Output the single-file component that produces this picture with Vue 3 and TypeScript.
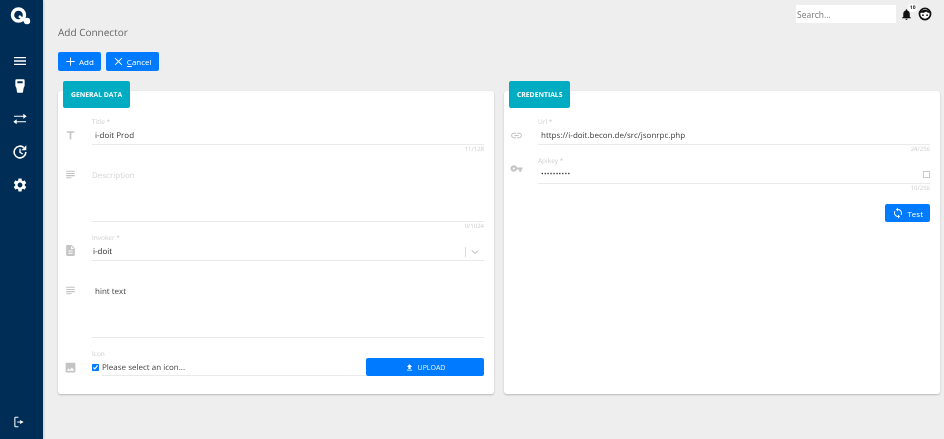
<template>
  <div class="app">
    <aside class="sidebar">
      <div class="logo">
        <svg width="22" height="18" viewBox="0 0 22 18">
          <circle cx="8.500" cy="8" r="6" fill="none" stroke="#fff" stroke-width="3.400" />
          <path d="M9 9l6 5" style="stroke: #fff; stroke-width: 2.400" />
          <circle cx="17" cy="14" r="3.200" fill="#fff" />
        </svg>
      </div>
      <div class="menu-toggle">
        <svg width="16" height="16" viewBox="0 0 24 24"><path :d="icons.menu" /></svg>
      </div>
      <div v-for="item in navItems" :key="item.name" class="nav-item">
        <svg width="16" height="16" viewBox="0 0 24 24">
          <path :d="item.path" fill-rule="evenodd" />
        </svg>
      </div>
      <div class="logout">
        <svg width="14" height="14" viewBox="0 0 24 24">
          <path d="M11 3H6a2 2 0 0 0-2 2v14a2 2 0 0 0 2 2h5v-1.800H5.800V4.800H11zM14 8.500v2.500H9v2h5v2.500L20 12z" />
        </svg>
      </div>
    </aside>

    <main class="main">
      <div class="topbar">
        <input class="search" placeholder="Search..." />
        <div class="bell">
          <svg width="13" height="13" viewBox="0 0 24 24"><path :d="icons.bell" /></svg>
          <span class="badge">10</span>
        </div>
        <svg class="avatar" width="14" height="14" viewBox="0 0 24 24">
          <circle cx="12" cy="12" r="9.500" fill="#fff" stroke="#111" stroke-width="3" />
          <path d="M3 10c2-7 16-7 18 0-5 0-6-1-7-2.500-2 2-6 2.500-11 2.500z" style="fill: #111" />
          <circle cx="8.500" cy="14" r="1.500" fill="#111" />
          <circle cx="15.500" cy="14" r="1.500" fill="#111" />
        </svg>
      </div>

      <h1 class="page-title">Add Connector</h1>

      <div class="actions">
        <button class="btn">
          <svg width="11" height="11" viewBox="0 0 24 24"><path d="M11 3h2v8h8v2h-8v8h-2v-8H3v-2h8z" /></svg>
          Add
        </button>
        <button class="btn">
          <svg width="11" height="11" viewBox="0 0 24 24"><path d="M5 3.600 12 10.600l7-7L20.400 5l-7 7 7 7-1.400 1.400-7-7-7 7L3.600 19l7-7-7-7z" /></svg>
          <span><u>C</u>ancel</span>
        </button>
      </div>

      <div class="cards">
        <section class="card">
          <div class="card-tab">GENERAL DATA</div>
          <div class="card-body">
            <div class="field">
              <svg class="field-icon icon-title" viewBox="0 0 24 24"><path :d="icons.title" /></svg>
              <div>
                <label>Title *</label>
                <div class="value">i-doit Prod</div>
                <div class="counter">11/128</div>
              </div>
            </div>

            <div class="field field-description">
              <svg class="field-icon icon-area" viewBox="0 0 24 24"><path :d="icons.subject" /></svg>
              <div>
                <div class="textarea placeholder">Description</div>
                <div class="counter">0/1024</div>
              </div>
            </div>

            <div class="field field-invoker">
              <svg class="field-icon icon-doc" viewBox="0 0 24 24"><path :d="icons.doc" /></svg>
              <div>
                <label>Invoker *</label>
                <div class="value select">
                  <span class="select-text">i-doit</span>
                  <span class="select-sep"></span>
                  <svg width="12" height="12" viewBox="0 0 24 24" class="chevron"><path d="M6 9l6 6 6-6" /></svg>
                </div>
              </div>
            </div>

            <div class="field field-hint">
              <svg class="field-icon icon-area" viewBox="0 0 24 24"><path :d="icons.subject" /></svg>
              <div class="textarea">hint text</div>
            </div>

            <div class="field field-upload">
              <svg class="field-icon icon-image" viewBox="0 0 24 24"><path :d="icons.image" /></svg>
              <div>
                <label>Icon</label>
                <div class="upload-row">
                  <input type="checkbox" class="check" checked />
                  <span class="upload-text">Please select an icon...</span>
                  <button class="upload-btn">
                    <svg width="9" height="9" viewBox="0 0 24 24"><path :d="icons.upload" /></svg>
                    UPLOAD
                  </button>
                </div>
              </div>
            </div>
          </div>
        </section>

        <section class="card">
          <div class="card-tab">CREDENTIALS</div>
          <div class="card-body">
            <div class="field">
              <svg class="field-icon icon-title" viewBox="0 0 24 24"><path :d="icons.link" /></svg>
              <div>
                <label>Url *</label>
                <div class="value">https://i-doit.becon.de/src/jsonrpc.php</div>
                <div class="counter">24/256</div>
              </div>
            </div>

            <div class="field field-key">
              <svg class="field-icon icon-key" viewBox="0 0 24 24"><path :d="icons.key" /></svg>
              <div>
                <label>Apikey *</label>
                <div class="value password">
                  <span>••••••••••</span>
                  <input type="checkbox" class="check" />
                </div>
                <div class="counter">10/256</div>
              </div>
            </div>

            <div class="test-row">
              <button class="btn">
                <svg width="12" height="12" viewBox="0 0 24 24"><path :d="icons.sync" /></svg>
                Test
              </button>
            </div>
          </div>
        </section>
      </div>
    </main>
  </div>
</template>

<script setup lang="ts">
const icons = {
  menu: "M3 18h18v-2H3v2zm0-5h18v-2H3v2zm0-7v2h18V6H3z",
  plug: "M7 2h10a2 2 0 0 1 2 2v6.500c0 2-.8 3-1.500 4l-1 6.500a1 1 0 0 1-1 1H8.500a1 1 0 0 1-1-1l-1-6.500c-.7-1-1.500-2-1.500-4V4a2 2 0 0 1 2-2zM8 5v3h8V5z",
  swap: "M3 7h14V4l5 3.800-5 3.800V8.700H3zM21 15.300H7v-2.900l-5 3.800L7 20v-3h14z",
  history: "M19.070 4.930A10 10 0 1 0 22 12h-2.400A7.600 7.600 0 1 1 17.370 6.630zM21.500 2v7.500H14zM11 7h2v5l3.600 2.100-1 1.700L11 13z",
  settings: "M19.140 12.940c.040-.300.060-.610.060-.940 0-.320-.020-.640-.070-.940l2.030-1.580c.180-.140.230-.410.120-.610l-1.920-3.320c-.120-.220-.370-.290-.590-.220l-2.390.960c-.500-.380-1.030-.700-1.620-.940l-.360-2.540c-.040-.240-.240-.410-.480-.410h-3.840c-.240 0-.430.170-.47.410l-.360 2.540c-.590.240-1.130.570-1.620.940l-2.390-.960c-.220-.080-.470 0-.590.220L2.740 8.870c-.120.210-.080.470.120.610l2.030 1.580c-.050.300-.090.630-.090.940s.020.640.07.940l-2.030 1.580c-.180.140-.230.410-.12.610l1.920 3.320c.120.220.370.290.590.220l2.390-.960c.500.380 1.030.700 1.620.940l.360 2.540c.050.240.240.410.48.410h3.840c.240 0 .440-.170.470-.410l.360-2.540c.590-.240 1.130-.560 1.620-.940l2.390.960c.220.080.470 0 .590-.220l1.920-3.320c.120-.220.070-.470-.120-.610l-2.010-1.580zM12 15.600c-1.980 0-3.600-1.620-3.600-3.600s1.620-3.600 3.600-3.600 3.600 1.620 3.600 3.600-1.620 3.600-3.600 3.600z",
  bell: "M12 22c1.100 0 2-.9 2-2h-4c0 1.100.890 2 2 2zm6-6v-5c0-3.070-1.640-5.640-4.500-6.320V4c0-.830-.670-1.500-1.500-1.500s-1.500.670-1.500 1.500v.680C7.630 5.360 6 7.920 6 11v5l-2 2v1h16v-1l-2-2z",
  title: "M5 4v3h5.500v12h3V7H19V4z",
  subject: "M14 17H4v2h10v-2zm6-8H4v2h16V9zM4 15h16v-2H4v2zM4 5v2h16V5H4z",
  doc: "M14 2H6c-1.100 0-1.990.9-1.990 2L4 20c0 1.100.890 2 1.990 2H18c1.100 0 2-.9 2-2V8l-6-6zm2 16H8v-2h8v2zm0-4H8v-2h8v2zm-3-5V3.500L18.500 9H13z",
  image: "M21 19V5c0-1.100-.9-2-2-2H5c-1.100 0-2 .9-2 2v14c0 1.100.9 2 2 2h14c1.100 0 2-.9 2-2zM8.500 13.500l2.500 3.010L14.500 12l4.500 6H5l3.500-4.500z",
  upload: "M5 20h14v-2H5v2zm0-10h4v6h6v-6h4l-7-7-7 7z",
  link: "M3.900 12c0-1.710 1.390-3.100 3.100-3.100h4V7H7c-2.760 0-5 2.240-5 5s2.240 5 5 5h4v-1.900H7c-1.710 0-3.100-1.390-3.100-3.100zM8 13h8v-2H8v2zm9-6h-4v1.900h4c1.710 0 3.100 1.390 3.100 3.100s-1.390 3.100-3.100 3.100h-4V17h4c2.760 0 5-2.240 5-5s-2.240-5-5-5z",
  key: "M12.650 10C11.830 7.670 9.610 6 7 6c-3.310 0-6 2.690-6 6s2.690 6 6 6c2.610 0 4.830-1.670 5.650-4H17v4h4v-4h2v-4H12.650zM7 14c-1.100 0-2-.9-2-2s.9-2 2-2 2 .9 2 2-.9 2-2 2z",
  sync: "M12 4V1L8 5l4 4V6c3.310 0 6 2.690 6 6 0 1.010-.250 1.970-.7 2.800l1.460 1.460C19.540 15.030 20 13.570 20 12c0-4.420-3.580-8-8-8zm0 14c-3.310 0-6-2.690-6-6 0-1.010.250-1.970.7-2.800L5.240 7.740C4.460 8.970 4 10.430 4 12c0 4.420 3.580 8 8 8v3l4-4-4-4v3z",
};

const navItems = [
  { name: "plug", path: icons.plug },
  { name: "swap", path: icons.swap },
  { name: "history", path: icons.history },
  { name: "settings", path: icons.settings },
];
</script>

<style>
html,
body {
  margin: 0;
  background: #eeeeee;
}
</style>

<style scoped>
.app {
  display: flex;
  height: 439px;
  width: 944px;
  overflow: hidden;
  font-family: "Open Sans", "Liberation Sans", sans-serif;
  text-rendering: geometricPrecision;
  color: #555;
  background: #eeeeee;
  filter: blur(0.35px);
}

.sidebar {
  width: 43px;
  flex: none;
  box-sizing: border-box;
  padding-right: 3px;
  background: #002d56;
  display: flex;
  flex-direction: column;
  align-items: center;
  box-shadow: 1px 0 2px rgba(0, 0, 0, 0.15);
}

.sidebar svg path {
  fill: #fff;
}

.logo {
  height: 52px;
  padding-top: 7px;
  box-sizing: border-box;
  margin-left: 2px;
}

.logo svg path {
  fill: none;
}

.menu-toggle {
  height: 17px;
  display: flex;
  align-items: center;
}

.nav-item {
  height: 33px;
  display: flex;
  align-items: center;
}

.logout {
  margin-top: auto;
  height: 20px;
  margin-bottom: 7px;
  display: flex;
  align-items: center;
  margin-left: -2px;
}

.main {
  flex: 1;
  padding: 0 4px 0 15px;
  min-width: 0;
}

.topbar {
  display: flex;
  justify-content: flex-end;
  align-items: center;
  padding-top: 5px;
  height: 18px;
  padding-right: 8px;
}

.search {
  width: 100px;
  height: 18px;
  box-sizing: border-box;
  border: none;
  outline: none;
  background: #fff;
  padding: 0 1px;
  font-family: inherit;
  font-size: 8.500px;
}

.search::placeholder {
  color: #777;
}

.bell {
  position: relative;
  width: 13px;
  height: 13px;
  margin-left: 4px;
  margin-right: 5px;
}

.bell svg {
  display: block;
}

.bell svg path {
  fill: #111;
}

.badge {
  position: absolute;
  top: -4px;
  right: -4px;
  padding: 1px 1.500px;
  background: #fff;
  border-radius: 5px;
  font-size: 5px;
  line-height: 6px;
  font-weight: 700;
  color: #222;
}

.avatar {
  flex: none;
}

.page-title {
  margin: 0 0 13px;
  height: 15px;
  padding-top: 1px;
  font-size: 10px;
  line-height: 16px;
  font-weight: 400;
  color: #666;
}

.actions {
  display: flex;
  gap: 5px;
  height: 19px;
}

.btn {
  display: inline-flex;
  align-items: center;
  justify-content: center;
  gap: 3px;
  height: 19px;
  padding: 0 7px;
  border: none;
  border-radius: 2px;
  background: #007bff;
  color: #fff;
  font-family: inherit;
  font-size: 8px;
}

.btn svg path {
  fill: #fff;
}

.cards {
  display: flex;
  gap: 10px;
  margin-top: 20px;
}

.card {
  position: relative;
  flex: 1;
  height: 303px;
  background: #fff;
  border-radius: 3px;
  box-shadow: 0 1px 2px rgba(0, 0, 0, 0.22);
}

.card-tab {
  position: absolute;
  top: -10px;
  left: 5px;
  height: 27px;
  padding: 0 8px;
  display: flex;
  align-items: center;
  border-radius: 2px;
  background: #00acc1;
  color: #fff;
  font-size: 6.800px;
  font-weight: 700;
}

.card-body {
  padding: 26px 10px 0 0;
}

.field {
  display: grid;
  grid-template-columns: 34px 1fr;
  position: relative;
}

.field-icon {
  position: absolute;
  left: 6px;
  top: 12px;
  width: 13px;
  height: 13px;
}

.field-icon path {
  fill: #c4c4c4;
}

.icon-area {
  top: 2px;
}

.icon-doc {
  top: 11px;
}

.icon-key {
  top: 6px;
}

.field > div,
.field > .textarea {
  grid-column: 2;
}

label {
  display: block;
  height: 10px;
  line-height: 10px;
  font-size: 6.500px;
  color: #cfcfcf;
}

.value {
  height: 17px;
  line-height: 18px;
  font-size: 8px;
  color: #3c3c3c;
  padding-left: 3px;
  border-bottom: 1px solid #eaeaea;
}

.counter {
  height: 9px;
  line-height: 9px;
  text-align: right;
  font-size: 6px;
  color: #cdcdcd;
}

.field-description {
  margin-top: 12px;
}

.textarea {
  padding: 4px 0 0 3px;
  height: 51px;
  line-height: 12px;
  font-size: 8px;
  color: #444;
  border-bottom: 1px solid #eaeaea;
}

.placeholder {
  padding-left: 0;
  color: #d4d4d4;
}

.field-invoker {
  margin-top: 2px;
}

.select {
  display: flex;
  align-items: center;
  padding-left: 1px;
}

.select-text {
  flex: 1;
  color: #2c2c2c;
}

.select-sep {
  width: 1px;
  height: 10px;
  background: #ddd;
}

.chevron {
  margin: 0 3px;
}

.chevron path {
  fill: none;
  stroke: #aaa;
  stroke-width: 2;
}

.field-hint {
  margin-top: 21px;
}

.field-upload {
  margin-top: 11px;
}

.upload-row {
  display: flex;
  align-items: center;
  height: 18px;
  margin-top: -1px;
}

.check {
  width: 13px;
  height: 13px;
  margin: -3px;
  flex: none;
  transform: scale(0.55);
  accent-color: #007bff;
}

.upload-text {
  flex: 1;
  margin-left: 3px;
  height: 17px;
  line-height: 19px;
  font-size: 8px;
  color: #444;
  border-bottom: 1px solid #eaeaea;
}

.upload-btn {
  flex: none;
  width: 118px;
  height: 18px;
  display: flex;
  align-items: center;
  justify-content: center;
  gap: 4px;
  border: none;
  border-radius: 2px;
  background: #007bff;
  color: #e8f2ff;
  font-family: inherit;
  font-size: 7px;
}

.upload-btn svg path {
  fill: #fff;
}

.field-key {
  margin-top: 2px;
}

.password {
  display: flex;
  align-items: center;
  justify-content: space-between;
  letter-spacing: 0.300px;
  font-size: 7px;
}

.test-row {
  display: flex;
  justify-content: flex-end;
  margin-top: 11px;
}

.test-row .btn {
  height: 18px;
}
</style>
